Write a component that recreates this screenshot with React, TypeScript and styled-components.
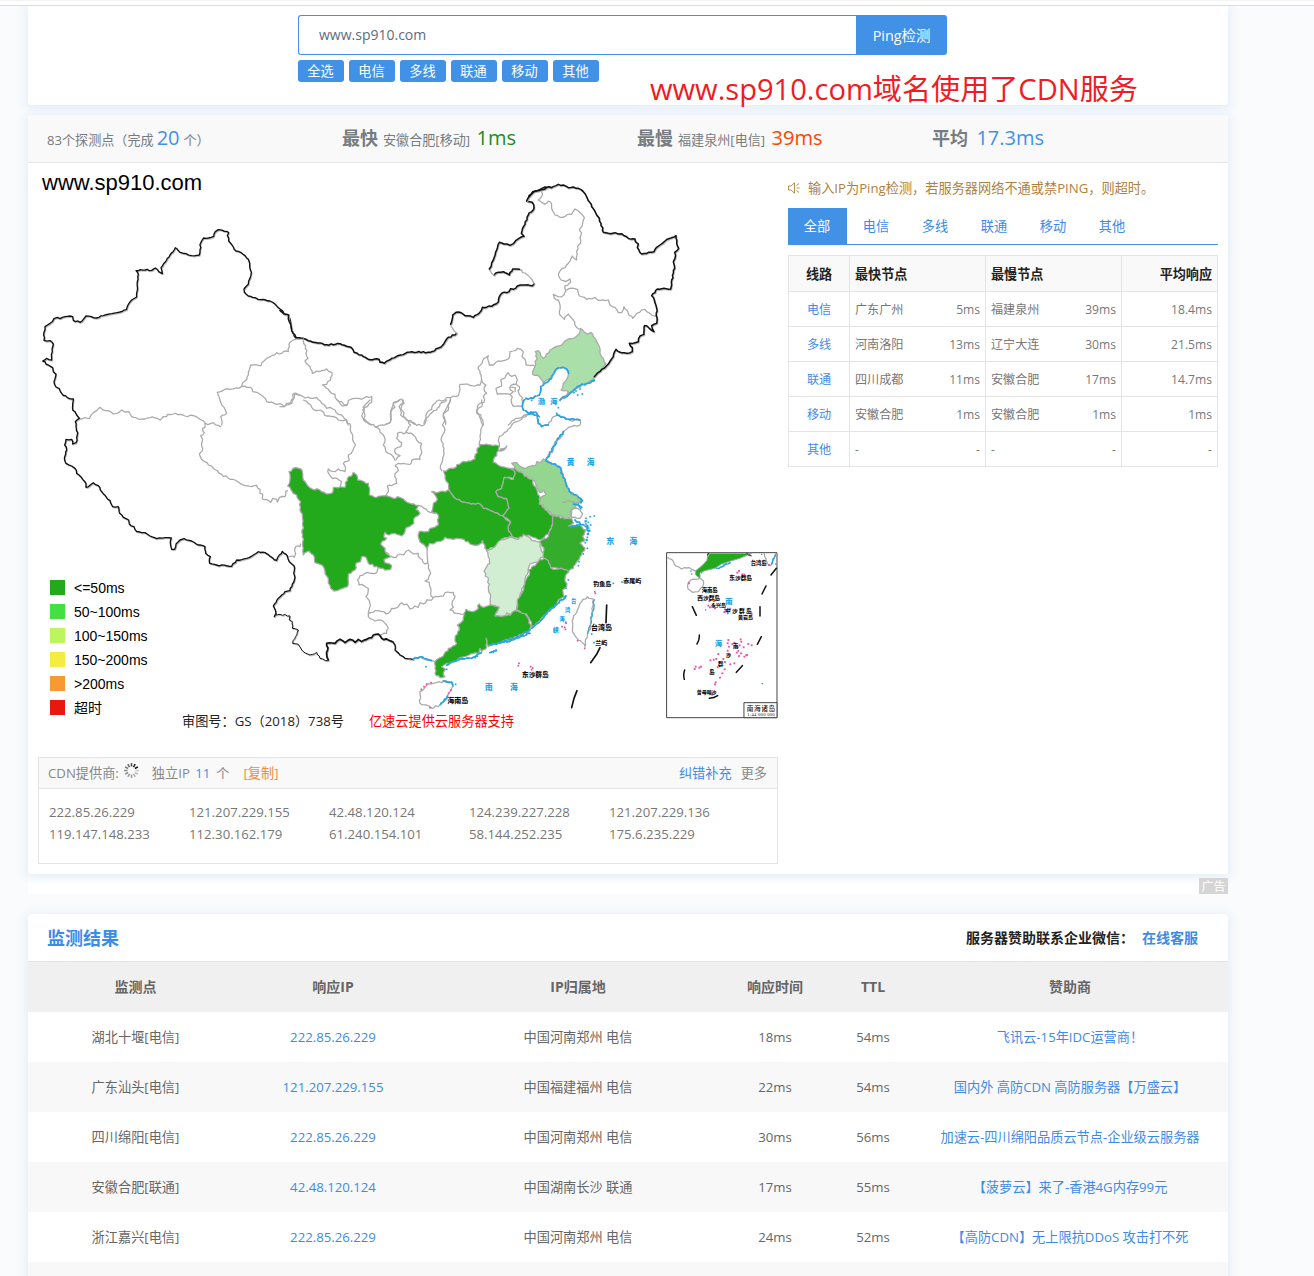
import React from "react";
import styled, { createGlobalStyle } from "styled-components";

const BLUE = "#4191e7";

const Global = createGlobalStyle`
  * { box-sizing: border-box; }
  html, body { margin: 0; padding: 0; }
  body {
    height: 1276px;
    overflow: hidden;
    background: #f9fbfd;
    color: #767c82;
    font: 13.2px/20px "Open Sans", "Noto Sans CJK SC", sans-serif;
  }
`;

const Page = styled.div`
  width: 1314px;
  height: 1276px;
  overflow: hidden;
`;
const TopStrip = styled.div`
  height: 6px;
  background: #fff;
  border-top: 1px solid #f3f3f3;
  border-bottom: 1px solid #dadce0;
`;
const Container = styled.main`
  width: 1200px;
  margin-left: 28px;
`;
const Card = styled.section<{ $h: number; $mt?: number }>`
  height: ${(p) => p.$h}px;
  margin-top: ${(p) => p.$mt ?? 0}px;
  background: #fff;
  border-radius: 3px;
  box-shadow: 0 2px 10px 2px #e3edf7;
  position: relative;
`;

/* search */
const SearchCard = styled(Card)`
  padding: 9px 0 0 270px;
  border-radius: 0 0 3px 3px;
  clip-path: inset(0 -20px -20px -20px);
`;
const SearchRow = styled.div`
  display: flex;
  width: 649px;
  height: 40px;
`;
const Field = styled.div`
  flex: 1;
  border: 1px solid ${BLUE};
  border-right: 0;
  border-radius: 3px 0 0 3px;
  padding: 0 20px;
  font-size: 14px;
  line-height: 38px;
  color: #5d6b80;
`;
const PingButton = styled.button`
  width: 91px;
  border: 0;
  border-radius: 0 3px 3px 0;
  background: ${BLUE};
  color: #fff;
  font: 14.4px/41px "Open Sans", "Noto Sans CJK SC", sans-serif;
  padding: 0;
`;
const Tags = styled.div`
  display: flex;
  gap: 5px;
  margin-top: 5px;
`;
const Tag = styled.span`
  width: 46px;
  height: 22px;
  border-radius: 3px;
  background: ${BLUE};
  color: #fff;
  text-align: center;
  line-height: 22px;
  padding-right: 1px;
`;
const Annotation = styled.div`
  position: absolute;
  left: 622px;
  top: 62px;
  font-size: 29.1px;
  line-height: 42px;
  color: #ee1c24;
  white-space: nowrap;
`;

/* summary */
const Summary = styled.header`
  height: 48px;
  background: #f9f9f9;
  border-bottom: 1px solid #e6e6e6;
  border-radius: 3px 3px 0 0;
  display: grid;
  grid-template-columns: repeat(4, 295px);
  padding-left: 19px;
`;
const Stat = styled.div`
  font-size: 13.1px;
  line-height: 46px;
  white-space: nowrap;
  b { font-size: 18px; margin-right: 5px; }
`;
const Big = styled.span<{ $c: string; $ml?: number }>`
  font-size: 20px;
  color: ${(p) => p.$c};
  margin: 0 4px 0 ${(p) => p.$ml ?? 3}px;
`;
const Body = styled.div`
  display: flex;
  gap: 10px;
  padding: 0 10px;
`;
const Left = styled.div`
  width: 740px;
`;
const MapBox = styled.div`
  height: 594px;
  position: relative;
`;
const MapSvg = styled.svg`
  display: block;
  width: 740px;
  height: 594px;
`;
const MapTitle = styled.div`
  position: absolute;
  left: 4px;
  top: 7px;
  color: #000;
  font: 22px/26px "Liberation Sans", Arial, sans-serif;
`;
const Legend = styled.div`
  position: absolute;
  left: 12px;
  top: 413px;
  display: grid;
  grid-auto-rows: 24px;
  color: #000;
  font: 14px/24px "Liberation Sans", "Noto Sans CJK SC", sans-serif;
`;
const LegendItem = styled.div<{ $c: string }>`
  display: flex;
  align-items: center;
  gap: 9px;
  &::before { content: ""; width: 15px; height: 15px; margin-bottom: 1px; background: ${(p) => p.$c}; }
`;
const Caption = styled.div`
  position: absolute;
  left: 144px;
  top: 548px;
  display: flex;
  gap: 25px;
  color: #222;
  white-space: nowrap;
  em { font-style: normal; color: #f00; }
`;

/* CDN box */
const Cdn = styled.div`
  height: 107px;
  border: 1px solid #e4e4e4;
`;
const CdnHead = styled.div`
  display: flex;
  height: 31px;
  align-items: center;
  background: #f9f9f9;
  border-bottom: 1px solid #e4e4e4;
  padding: 0 10px 0 9px;
  white-space: pre;
  color: #888;
`;
const Link = styled.a<{ $c?: string }>`
  color: ${(p) => p.$c ?? "#3c8ce7"};
`;
const Count = styled.span`
  margin: 0 6px 0 2px;
  color: #3c8ce7;
`;
const Copy = styled.span`
  margin-left: 14px;
  color: #f08b45;
`;
const Spinner = styled.svg`
  margin: -5px 12px 0 4px;
`;
const Push = styled.span`
  margin-left: auto;
  display: flex;
  gap: 9px;
`;
const Ips = styled.div`
  display: grid;
  grid-template-columns: repeat(5, 140px);
  grid-auto-rows: 22px;
  padding: 12px 10px;
  line-height: 22px;
  color: #777;
`;

/* right column */
const Right = styled.div`
  width: 430px;
  padding-top: 14px;
`;
const Notice = styled.div`
  display: flex;
  align-items: center;
  gap: 8px;
  height: 22px;
  color: #b0803c;
  white-space: nowrap;
`;
const Tabs = styled.nav`
  display: flex;
  height: 37px;
  margin-top: 9px;
  border-bottom: 1px solid ${BLUE};
`;
const Tab = styled.span<{ $on?: boolean }>`
  width: 59px;
  padding-right: 1px;
  text-align: center;
  line-height: 36px;
  color: ${(p) => (p.$on ? "#fff" : "#3c8ce7")};
  background: ${(p) => (p.$on ? BLUE : "transparent")};
`;
const Lines = styled.div`
  margin-top: 10px;
  border: 1px solid #e4e4e4;
  border-width: 1px 0 0 1px;
`;
const LineRow = styled.div<{ $head?: boolean }>`
  display: grid;
  grid-template-columns: 61px 136px 136px 96px;
  height: ${(p) => (p.$head ? 36 : 35)}px;
  font-size: ${(p) => (p.$head ? 13.1 : 12.1)}px;
  font-weight: ${(p) => (p.$head ? 700 : 400)};
  color: ${(p) => (p.$head ? "#222" : "#777")};
  background: ${(p) => (p.$head ? "#f9f9f9" : "#fff")};
`;
const LineCell = styled.div<{ $j?: string }>`
  display: flex;
  align-items: center;
  justify-content: ${(p) => p.$j ?? "space-between"};
  padding: 1px 5px 0;
  border: 1px solid #e4e4e4;
  border-width: 0 1px 1px 0;
`;

/* ad strip */
const AdStrip = styled.div`
  height: 20px;
  display: flex;
  justify-content: flex-end;
  align-items: flex-end;
  background: #fff;
`;
const AdTag = styled.span`
  position: relative;
  width: 29px;
  height: 16px;
  background: #d5d5d5;
  color: #fff;
  font-size: 12px;
  line-height: 17px;
  text-align: center;
`;

/* results */
const ResultHead = styled.header`
  height: 48px;
  display: flex;
  align-items: center;
  justify-content: space-between;
  padding: 0 30px 0 19px;
  border-bottom: 1px solid #e4e4e4;
  font-size: 14px;
  font-weight: 700;
  color: #222;
  h2 { margin: 0; font-size: 18px; color: #3c8ce7; }
`;
const Contact = styled.span`
  display: flex;
  gap: 8px;
`;
const Row = styled.div<{ $bg: string; $head?: boolean }>`
  display: grid;
  grid-template-columns: 215px 180px 310px 84px 112px 282px;
  height: 50px;
  align-items: center;
  text-align: center;
  white-space: nowrap;
  background: ${(p) => p.$bg};
  color: #666;
  font-size: ${(p) => (p.$head ? 14 : 13.2)}px;
  font-weight: ${(p) => (p.$head ? 700 : 400)};
`;

const tags = ["全选", "电信", "多线", "联通", "移动", "其他"];
const tabs = ["全部", "电信", "多线", "联通", "移动", "其他"];
const legend: [string, string][] = [
  ["#22aa1c", "<=50ms"],
  ["#43e043", "50~100ms"],
  ["#bdf55f", "100~150ms"],
  ["#f5ec42", "150~200ms"],
  ["#f79a34", ">200ms"],
  ["#e81710", "超时"],
];
const lines = [
  ["电信", "广东广州", "5ms", "福建泉州", "39ms", "18.4ms"],
  ["多线", "河南洛阳", "13ms", "辽宁大连", "30ms", "21.5ms"],
  ["联通", "四川成都", "11ms", "安徽合肥", "17ms", "14.7ms"],
  ["移动", "安徽合肥", "1ms", "安徽合肥", "1ms", "1ms"],
  ["其他", "-", "-", "-", "-", "-"],
];
const ips = [
  "222.85.26.229", "121.207.229.155", "42.48.120.124", "124.239.227.228", "121.207.229.136",
  "119.147.148.233", "112.30.162.179", "61.240.154.101", "58.144.252.235", "175.6.235.229",
];
const results = [
  ["湖北十堰[电信]", "222.85.26.229", "中国河南郑州 电信", "18ms", "54ms", "飞讯云-15年IDC运营商！"],
  ["广东汕头[电信]", "121.207.229.155", "中国福建福州 电信", "22ms", "54ms", "国内外 高防CDN 高防服务器【万盛云】"],
  ["四川绵阳[电信]", "222.85.26.229", "中国河南郑州 电信", "30ms", "56ms", "加速云-四川绵阳品质云节点-企业级云服务器"],
  ["安徽合肥[联通]", "42.48.120.124", "中国湖南长沙 联通", "17ms", "55ms", "【菠萝云】来了-香港4G内存99元"],
  ["浙江嘉兴[电信]", "222.85.26.229", "中国河南郑州 电信", "24ms", "52ms", "【高防CDN】无上限抗DDoS 攻击打不死"],
];

/* Borders are stored as coarse polylines; this adds small fixed wiggles between the
   points. Both directions of an edge give the same wiggle, so neighbours stay joined. */
const hash = (a: number, b: number) => {
  const v = Math.sin(a * 12.9898 + b * 78.233) * 43758.5453;
  return v - Math.floor(v) - 0.5;
};
const rough = (d: string, amp = 6) =>
  d
    .split("M")
    .filter((s) => s.trim())
    .map((sub) => {
      const closed = sub.includes("Z");
      const n = (sub.match(/-?[\d.]+/g) ?? []).map(Number);
      const pts: number[][] = [];
      for (let i = 0; i + 1 < n.length; i += 2) pts.push([n[i], n[i + 1]]);
      if (closed) pts.push(pts[0]);
      const out: number[][] = [pts[0]];
      for (let i = 1; i < pts.length; i++) {
        const [ax, ay] = pts[i - 1];
        const [bx, by] = pts[i];
        const len = Math.hypot(bx - ax, by - ay);
        const k = Math.floor(len / 6.5);
        for (let j = 1; j < k; j++) {
          const t = j / k;
          const x = ax + (bx - ax) * t;
          const y = ay + (by - ay) * t;
          const off = hash(Math.round(x), Math.round(y)) * amp;
          const s = ax < bx || (ax === bx && ay < by) ? 1 : -1;
          out.push([x - ((by - ay) / len) * off * s, y + ((bx - ax) / len) * off * s]);
        }
        out.push([bx, by]);
      }
      return "M" + out.map((p) => p.map((c) => c.toFixed(1)).join(",")).join(" ") + (closed ? "Z" : "");
    })
    .join(" ");

/* Map sheets: each is drawn at three times the map's scale from its own origin. */
const Sheet = ({ x, y, children }: { x: number; y: number; children: React.ReactNode }) => (
  <g transform={`translate(${x} ${y}) scale(0.33333)`}>{children}</g>
);
const K = ({ d, w = 4.5 }: { d: string; w?: number }) => {
  const r = rough(d, 4.5);
  return (
    <>
      <path d={r} stroke="#bbb" strokeWidth={w} transform="translate(2 3)" />
      <path d={r} stroke="#111" strokeWidth={w} />
    </>
  );
};
const G = ({ d, f }: { d: string; f?: string }) => (
  <path d={rough(d)} stroke="#aaa" strokeWidth={3.8} fill={f ?? "none"} />
);
const B = ({ d, w = 5 }: { d: string; w?: number }) => {
  const r = rough(d);
  return (
    <>
      <path d={r} stroke="#9ab" strokeWidth={4} />
      <path d={r} stroke="#20a5ea" strokeWidth={w} strokeDasharray="20 5 9 6" />
    </>
  );
};
const Dots = ({ pts, c = "#20a5ea", s = 5 }: { pts: number[][]; c?: string; s?: number }) => (
  <>{pts.map(([x, y], i) => <rect key={i} x={x - s / 2} y={y - s / 2} width={s} height={s} fill={c} />)}</>
);
const T = ({ x, y, t, c = "#111", s = 20, sp = 0 }: { x: number; y: number; t: string; c?: string; s?: number; sp?: number }) => (
  <text x={x} y={y} fill={c} fontSize={s} letterSpacing={sp} fontWeight={900} fontFamily='"Noto Sans CJK SC", sans-serif'>{t}</text>
);
const GREEN = "#22aa1c";
const SEA = "#20a5ea";
const PINK = "#ea4cab";

const ChinaMap = () => (
  <MapSvg viewBox="38 163 740 594" fill="none" strokeLinejoin="round" strokeLinecap="round">
    <Sheet x={30} y={165}>
      <G d="M575,780 572,755 590,745 583,728 572,712 567,695 562,682 580,676 600,673 618,669 635,665 650,667 662,667 668,680 680,682 690,688 700,695 710,710 725,711 740,718 750,716 762,726 775,719 785,715 790,700 788,688 797,684 810,692" />
      <G d="M635,663 645,648 655,630 658,614 662,600 693,602 702,588 710,580 725,572 740,563 748,567 762,559 775,560 778,545 780,532 790,525 800,522" />
      <K w={4} d="M810,520 798,519 790,507 784,490 783,478 781,468 775,451 762,446 750,432 742,425 735,417 720,408 700,403 684,403 668,397 655,393 643,382 642,372 655,358 656,348 660,340 664,322 659,305 659,295 655,283 645,272 632,262 618,258 606,240 596,228 592,212 596,203 583,199 578,196 565,194 556,200 551,214 535,219 521,219 513,232 510,255 508,270 485,272 468,266 450,262 436,248 420,270 405,292 393,308 397,326 386,320 376,309 365,316 345,315 318,317 325,328 322,350 321,380 320,396 305,405 294,420 289,434 270,441 245,446 220,452 200,459 184,455 168,453 160,463 150,472 130,466 128,455 120,453 105,455 90,461 82,457 72,461 60,475 45,485 41,510 42,526 60,527 70,537 67,560 65,585 50,580 38,588 55,600 68,608 70,620 78,628 72,650 78,666 88,671 95,685 112,698 130,702 128,735 140,750 148,760" />
    </Sheet>
    <Sheet x={280} y={165}>
      <K d="M0,437 12,447 26,450 25,462 32,478 35,497 48,518 70,520 100,532 140,539 180,536 213,547 222,562 245,570 270,584 297,583 300,592 313,595 335,580 362,570 390,561 450,562 482,547 500,522 530,505" />
      <G d="M530,505 518,490 512,478" />
      <K d="M512,478 518,450 528,442 545,444 555,452 580,457 597,445 607,427 635,424 655,411 657,397 667,383 687,380 692,371 700,373 712,363 730,360 758,362 762,356" />
      <G d="M762,356 757,345 740,328 718,313" />
      <K d="M718,313 698,312 688,330 670,320 655,322 642,330" />
      <G d="M642,330 628,315" />
      <K d="M628,312 634,303 640,285 650,255 658,232 672,237 690,241 700,236 708,226 732,214 724,205 735,178 745,150 762,130 757,112 740,109 747,92 758,80 780,73 795,66 810,66" />
      <G d="M70,522 76,550 84,580 75,588 90,605 97,625 110,618 125,617 140,612 155,622 152,645 140,658 128,660 145,673 155,685 165,688 170,704 185,710 200,722 205,706 225,700 245,703 260,695 275,695 275,712 262,725 248,735 255,752 250,765 265,773 275,780" />
      <G d="M0,725 15,723 20,715 32,714 35,703 42,700 42,685 60,690 75,699 85,696 100,700 110,697 125,715 140,730 150,727 165,735 175,748 190,756 200,765 205,780" />
      <G d="M320,778 330,772 333,748 335,730 345,710 365,702 372,715 362,735 362,750 375,757 385,768 392,766 405,778" />
      <G d="M432,775 438,760 440,745 455,733 465,715 478,705 492,706 500,698 512,698 520,693 535,692 540,658 570,661 600,660 605,645 600,625 595,605 606,595 612,580 625,572 628,600 640,600 655,588 670,587 688,578 690,560 700,558 712,550 722,553 730,560 726,575 735,583 738,600 765,603" />
      <G d="M512,700 508,715 505,735 490,750 497,778" />
      <G d="M605,645 618,660 612,672 620,685 610,695 612,712 596,718 590,740 603,750 610,780" />
      <G d="M685,623 695,634 705,630 712,645 708,658 692,662 692,675 700,680 690,688 675,686 652,688 648,670 665,663 662,645 675,639Z M708,658 718,665 714,678 728,698 724,725 700,724 695,715 697,696 690,688 M692,666 706,668 705,680" />
      <G d="M685,780 695,768 715,760 740,750" />
    </Sheet>
    <Sheet x={500} y={165}>
      <G d="M125,80 125,95 115,105 125,112 135,118 145,108 155,117 155,130 165,150 180,157 200,150 215,148 225,132 240,143 253,158 248,175 240,190 243,210 242,235 233,245 230,285 217,273 210,288 195,308 180,318 175,328 183,345 197,350 210,342 212,352 195,362 198,378 192,390 175,395 160,388 163,400 175,405 180,420 178,440 185,455 193,463 205,447 220,465 228,485 236,492" />
      <G d="M200,375 222,370 232,373 238,393 260,403 275,402 285,397 295,406 315,407 325,405 330,420 345,427 355,443 365,443 372,425 385,445 398,460 410,445 425,435 435,433 440,440 455,450 470,454" />
      <G f="#abdfaa" d="M240,490 252,500 262,508 273,502 280,515 290,530 298,545 300,565 310,580 318,597 305,613 290,628 280,645 260,655 235,668 220,680 205,690 180,708 184,698 200,690 205,680 183,675 190,655 205,630 204,618 190,607 168,613 160,628 150,640 140,645 130,657 118,635 98,628 105,605 105,590 112,580 106,560 115,557 122,572 130,580 150,555 168,545 185,540 200,525 228,515 237,507Z" />
      <K d="M80,108 90,92 102,80 125,74 140,68 160,65 175,58 190,60 205,68 220,66 235,70 250,80 262,100 275,125 290,150 298,160 303,175 310,202 325,205 345,203 355,207 365,206 385,220 405,222 406,230 415,237 412,248 425,267 445,262 462,260 470,247 480,240 495,228 510,220 528,212 530,235 536,250 524,262 525,280 520,290 524,310 515,345 515,360 512,372 472,372 465,383 455,392 463,405 470,430 470,475 455,482 462,500 448,490 440,482 433,482 432,508 420,513 415,530 405,533 388,535 397,548 397,560 380,565 365,563 348,553 340,575 325,597 305,613 283,635" />
      <B d="M283,645 262,655 240,662 205,690 180,705 M206,625 200,612 190,607 168,613 155,640 122,665 118,690 100,700 78,700 68,715 70,735 85,745 110,742 118,755" />
      <Dots pts={[[240, 672], [247, 687], [233, 690], [222, 683], [228, 678], [95, 706], [175, 728], [170, 745], [281, 648]]} />
      <T x={113} y={717} t="渤" c={SEA} s={22} /><T x={150} y={717} t="海" c={SEA} s={22} />
    </Sheet>
    <Sheet x={30} y={400}>
      <G d="M148,55 178,55 190,38 200,32 210,22 225,32 235,32 250,42 262,40 275,30 284,36 297,35 305,50 318,53 330,58 345,57 360,53 375,54 390,60 400,50 410,50 412,43 430,42 450,43 465,48 490,47 510,58 525,68 533,74 550,68 572,80" />
      <G d="M525,70 525,82 518,85 523,98 512,107 518,118 515,130 518,145 508,162 520,182 535,195 550,205 562,212 575,223 600,238 615,240 630,250 645,257 655,258 665,260 680,256 690,268 690,280 698,282 697,297 710,299 722,307 728,295 740,298 742,306 748,293 765,290 767,275 772,272" />
      <K w={4} d="M148,55 136,65 139,85 142,105 138,128 128,132 125,118 108,118 104,135 110,150 104,170 108,190 125,198 135,205 140,220 158,238 168,250 168,262 180,256 190,248 205,257 215,275 228,290 240,302 248,320 265,320 269,340 280,352 296,360 298,372 312,380 320,395 335,398 345,398 360,408 380,416 405,413 424,414 421,430 425,448 434,448 438,432 450,420 462,416 485,423 505,435 525,440 527,460 541,470 539,490 560,495 605,499 620,480 650,475 670,465 685,455 705,458 722,470 740,481 748,465 757,454 772,468 778,485 792,497 793,540 780,572 765,575 745,595 730,618 738,640 733,650" />
    </Sheet>
    <Sheet x={260} y={400}>
      <G d="M130,0 140,4 160,28 180,30 200,48 220,50 235,60 260,60 272,80 272,95 278,105 278,120 287,135 278,152 265,165 268,180 250,190 257,203 255,215 235,207 225,215 205,207 207,222 218,236 232,236 245,245 240,262" />
      <G d="M310,20 312,35 305,48 320,65 345,80 355,85 360,97 370,105 375,125 370,135 378,155 395,165 405,180" />
      <G d="M420,0 400,8 405,22 393,35 392,55 388,70 365,75 345,80 M310,22 330,0 M232,0 248,18 262,14" />
      <G d="M430,0 428,10 417,20 432,38 430,50 445,63 462,68 470,76 492,75 498,55 515,38 530,30 540,12 560,0" />
      <G d="M445,63 452,75 438,95 460,105 470,120 485,130 485,155 480,178 455,181 450,193 430,190 415,190 405,197 415,212 405,222 410,250 395,257 382,258 385,275 378,285 M438,98 412,100 410,115 425,128 423,140 405,147 408,162 420,167 408,180" />
      <G d="M570,0 562,20 550,40 555,60 547,75 555,90 548,105 545,125 552,145 548,180 542,195 545,212" />
      <G d="M665,0 665,20 652,25 650,40 662,58 668,75 662,90 660,110 658,133 M810,40 798,50 770,65 755,75 740,95 718,110 715,122 718,138" />
      <G d="M475,316 492,325 510,337 525,340 M372,455 395,470 408,472 420,462 430,465 445,450 460,462 475,460 480,475 495,492 503,488 502,450" />
      <G d="M503,488 505,505 512,520 505,538 495,543 508,547 512,565 512,580 518,592" />
      <G d="M355,503 350,518 335,520 315,520 300,527 292,540 297,555 312,557 325,565 318,590 330,610 325,640 345,632 385,640 395,625 415,620 425,608 432,615 440,612 450,627 465,618 475,622 480,608 490,612 500,600 515,600 520,592 550,588 555,578 580,577 585,590 577,605 580,622 570,630 590,640 610,643" />
      <G d="M325,640 325,650 345,663 362,660 380,675 385,685 380,700 355,705" />
      <G d="M88,470 98,468 103,472 107,460 107,440 120,440 122,432" />
      <G f={GREEN} d="M105,203 125,208 128,220 130,240 150,263 165,270 170,266 185,275 200,282 218,278 220,262 255,262 262,235 275,228 280,217 290,225 293,240 325,250 328,285 350,292 380,287 400,295 412,290 430,297 455,312 475,316 468,328 480,340 462,355 462,370 455,375 440,382 435,395 425,408 405,400 388,405 375,397 372,412 380,415 362,432 375,445 378,460 392,470 372,480 375,488 395,497 392,508 375,510 355,503 325,490 318,472 305,470 302,485 288,490 285,510 265,522 263,560 240,568 222,573 212,565 205,540 185,495 165,488 160,465 147,453 130,465 127,350 120,330 122,305 110,285 100,280 83,258 90,240 87,215Z" />
      <G f={GREEN} d="M515,275 535,277 570,272 580,290 590,298 620,308 660,312 670,325 705,338 728,347 750,365 745,385 757,410 730,415 712,435 680,450 668,422 655,435 630,432 625,425 590,415 580,418 555,412 550,420 530,425 520,432 508,430 502,450 485,430 475,412 478,395 505,395 510,385 535,375 535,345 515,335 520,310 532,298Z" />
      <G f={GREEN} d="M658,133 718,138 715,152 700,187 725,200 750,205 765,215 760,235 733,232 725,265 708,275 715,290 740,295 747,325 728,347 705,338 670,325 660,312 620,308 590,298 570,275 565,250 555,235 550,213 580,205 605,187 625,183 645,177Z" />
      <G f={GREEN} d="M755,205 780,215 815,235 820,255 832,275 840,290 838,312 853,325 870,343 882,348 875,385 850,415 840,420 805,405 785,415 757,410 745,385 752,365 728,347 747,325 740,295 715,290 708,275 725,265 733,232 760,238 765,215Z" />
      <G f="#75a971" d="M718,153 740,138 732,150Z" />
      <G f="#d2eed2" d="M757,412 775,418 790,403 805,410 815,422 840,425 843,445 852,465 835,485 810,492 805,515 797,530 795,545 785,575 775,600 765,635 752,643 740,638 730,650 705,645 718,622 690,612 692,590 685,560 685,540 672,515 680,500 690,490 680,452 705,440 715,425Z" />
      <G f={GREEN} d="M658,612 670,622 690,615 715,620 705,648 730,648 752,645 765,632 795,640 805,655 812,683 805,700 785,703 760,715 740,718 720,730 698,732 685,740 678,715 680,742 665,755 660,745 655,762 640,760 620,768 600,773 585,785 560,790 545,800 556,808 550,818 555,830 540,833 525,820 525,785 550,768 565,745 590,730 585,715 598,690 592,675 610,660 612,640 618,628 640,635 650,630Z" />
      <K w={3} d="M45,645 60,643 90,648 88,660 97,665 97,685 115,690 107,710 98,730 115,733 130,755 150,765 170,757 180,775 205,782" />
      <K w={5} d="M205,780 200,765 203,750 200,730 225,730 240,718 255,728 270,718 285,727 295,718 305,725 320,718 335,713 340,705 355,702 365,715 385,720 398,725" />
      <K w={4} d="M398,725 405,735 405,750 420,765 435,775 460,779" />
      <G d="M460,779 480,770 495,778 512,780 525,785" />
      <B d="M460,777 480,770 500,777 515,782 M560,796 600,777 640,772 665,758 M690,758 710,752 M690,735 760,720 810,700" />
      <G f="#fff" d="M480,875 495,862 505,852 530,848 560,843 575,845 580,858 565,880 560,895 540,915 515,925 500,915 480,910Z" />
      <B d="M550,843 575,847 578,860 M562,888 540,915" />
      <Dots c={PINK} pts={[[484, 868], [492, 860], [500, 852], [513, 848], [572, 870], [566, 880], [510, 923]]} />
      <Dots pts={[[498, 800], [645, 773], [652, 769], [700, 757], [708, 750], [560, 808], [587, 853]]} />
      <T x={562} y={908} t="海南岛" s={21} />
      <T x={675} y={869} t="南" c={SEA} s={23} />
    </Sheet>
    <Sheet x={500} y={400}>
      <G d="M75,45 85,43 112,45 115,70 125,80 145,75 160,50 172,43 185,52 210,62 240,60 240,75 215,80 190,95 185,110 165,125 160,150 145,165 138,180" />
      <B d="M85,43 112,45 115,70 125,80 145,75 M170,45 210,58 240,60 M190,95 160,140 138,180" />
      <G f="#94d690" d="M35,190 50,187 62,200 78,205 92,198 105,198 110,185 120,188 130,177 150,190 180,203 188,225 195,245 208,275 225,285 245,300 243,310 220,305 228,322 213,330 212,350 195,357 180,347 155,343 133,325 130,315 118,312 120,295 138,285 132,270 120,278 105,245 98,238 85,235 70,222 45,205Z" />
      <G f="#33ad2b" d="M162,345 195,357 215,355 220,370 205,378 235,375 258,390 248,410 252,425 240,430 255,445 240,470 220,505 205,515 185,505 150,503 145,485 130,475 132,450 120,425 145,410 155,380Z" />
      <G f={GREEN} d="M135,475 145,482 152,503 165,508 185,505 207,515 195,535 200,560 188,570 192,590 175,600 165,620 130,650 95,683 90,660 80,642 50,630 52,600 65,580 75,545 88,525 85,510 110,490 118,478Z" />
      <G f="#fff" d="M215,330 232,325 248,342 240,355 215,352Z" />
      <G d="M187,308 210,303 225,312 235,308" />
      <B d="M138,182 178,200 198,250 208,275 230,285 248,303 M220,312 245,322 M225,360 262,382 266,395 M213,380 240,375 M198,588 165,615 130,655 95,685 M90,690 50,712 0,728" />
      <Dots pts={[[270, 350], [283, 348], [258, 355], [265, 367], [272, 375], [266, 384], [258, 372], [262, 412], [256, 428], [262, 445], [250, 462], [237, 485], [235, 497], [198, 565], [205, 540], [195, 590], [340, 550], [366, 546], [275, 702], [282, 728], [188, 653], [198, 670], [235, 312], [242, 326]]} />
      <Dots s={7} pts={[[262, 378], [268, 392], [257, 364], [240, 320], [243, 305], [264, 402], [260, 420]]} />
      <G f="#fff" d="M262,590 282,598 278,620 275,640 272,680 262,705 255,740 247,728 235,720 217,690 220,655 232,630 245,605Z" />
      <B w={3} d="M283,600 276,640 273,670 264,700" />
      <Dots c={PINK} pts={[[284, 575], [286, 580], [197, 667], [186, 680], [194, 682], [196, 688], [233, 722], [254, 745], [57, 790], [55, 797], [92, 800], [98, 804], [95, 809]]} />
      <path d="M320,615 318,668 M300,743 290,763 272,788 M231,872 222,895 215,923" stroke="#111" strokeWidth={5} />
      <T x={200} y={195} t="黄" c={SEA} s={23} /><T x={260} y={195} t="海" c={SEA} s={23} />
      <T x={319} y={432} t="东" c={SEA} s={24} /><T x={388} y={432} t="海" c={SEA} s={24} />
      <T x={30} y={869} t="海" c={SEA} s={23} />
      <T x={213} y={608} t="台" c={SEA} s={16} /><T x={195} y={635} t="湾" c={SEA} s={16} />
      <T x={178} y={663} t="海" c={SEA} s={16} /><T x={158} y={697} t="峡" c={SEA} s={18} />
      <T x={280} y={557} t="钓鱼岛" s={18} /><T x={370} y={550} t="赤尾屿" s={18} />
      <T x={273} y={691} t="台湾岛" s={21} /><T x={286} y={736} t="兰屿" s={18} />
      <T x={66} y={832} t="东沙群岛" s={20} />
    </Sheet>
    <Sheet x={655} y={540}>
      <rect x={36} y={38} width={330} height={495} fill="#fff" stroke="#444" strokeWidth={3} />
      <G d="M38,52 50,58 58,72 70,80 80,87 95,84 110,88 120,92" />
      <path d="M160,40 290,40 255,55 230,62 200,72 180,85 150,92 135,98 135,115 122,105 122,92 140,78 155,62Z" fill={GREEN} stroke="#9aa" strokeWidth={3} />
      <K w={3} d="M160,40 158,45 M275,40 288,46" />
      <G d="M99,130 108,120 135,115 145,122 143,140 130,155 112,157 99,147Z M328,40 335,65 347,77 352,62 362,40" />
      <B w={4} d="M185,85 225,68 M350,72 362,45" />
      <Dots pts={[[108, 93], [110, 102], [320, 43], [140, 98], [205, 75], [152, 210], [322, 431], [362, 72]]} s={4} />
      <path d="M364,85 348,105 M333,138 321,162 M315,200V228 M112,200 124,226 M133,285 Q134,300 126,312 M319,290 307,313 M262,377 244,397 M89,390 Q84,405 88,418 M163,475 Q178,474 188,467" stroke="#111" strokeWidth={4.5} />
      <Dots c={PINK} s={5.5} pts={[[252, 93], [247, 98], [262, 103], [268, 104], [342, 75], [102, 130], [163, 183], [178, 183], [160, 197], [165, 202], [180, 205], [210, 208], [225, 206], [208, 216], [216, 213], [290, 222], [220, 300], [218, 310], [222, 320], [232, 312], [238, 308], [257, 298], [259, 305], [254, 316], [248, 322], [266, 322], [280, 312], [290, 316], [274, 346], [268, 350], [252, 348], [245, 338], [250, 333], [258, 340], [276, 345], [190, 342], [184, 357], [176, 359], [166, 361], [205, 357], [210, 366], [226, 373], [238, 370], [218, 332], [220, 341], [138, 380], [133, 383], [122, 380], [119, 387], [209, 388], [202, 400], [195, 413], [182, 427], [180, 433], [188, 382], [172, 464]]} />
      <T x={287} y={76} t="台湾岛" s={16} /><T x={223} y={121} t="东沙群岛" s={17} />
      <T x={140} y={157} t="海南岛" s={16} /><T x={127} y={180} t="西沙群岛" s={17} />
      <T x={168} y={200} t="永兴岛" s={15} /><T x={210} y={219} t="中沙群岛" s={17} sp={4} />
      <T x={249} y={238} t="黄岩岛" s={15} />
      <T x={211} y={193} t="南" c={SEA} s={22} /><T x={179} y={317} t="海" c={SEA} s={22} />
      <T x={234} y={323} t="南" s={16} /><T x={212} y={351} t="沙" s={16} /><T x={189} y={377} t="群" s={16} /><T x={163} y={402} t="岛" s={16} />
      <T x={125} y={461} t="曾母暗沙" s={15} />
      <rect x={268} y={488} width={98} height={45} fill="#fff" stroke="#444" strokeWidth={3} />
      <text x={275} y={512} fontSize={20} letterSpacing={2} fontWeight={500} fill="#111" fontFamily='"Noto Sans CJK SC", sans-serif'>南海诸岛</text>
      <text x={277} y={528} fontSize={14} fill="#111" textLength={82} fontFamily='"Liberation Serif", serif'>1:44 000 000</text>
    </Sheet>
  </MapSvg>
);

export default function App() {
  return (
    <Page>
      <Global />
      <TopStrip />
      <Container>
        <SearchCard $h={99}>
          <SearchRow>
            <Field>www.sp910.com</Field>
            <PingButton>Ping检测</PingButton>
          </SearchRow>
          <Tags>{tags.map((t) => <Tag key={t}>{t}</Tag>)}</Tags>
          <Annotation>www.sp910.com域名使用了CDN服务</Annotation>
        </SearchCard>

        <Card $h={759} $mt={10}>
          <Summary>
            <Stat>83个探测点（完成<Big $c="#4191e7">20</Big>个）</Stat>
            <Stat><b>最快</b>安徽合肥[移动] <Big $c="#228b22">1ms</Big></Stat>
            <Stat><b>最慢</b>福建泉州[电信] <Big $c="#ff4500">39ms</Big></Stat>
            <Stat><b>平均</b> <Big $c="#4191e7" $ml={0}>17.3ms</Big></Stat>
          </Summary>
          <Body>
            <Left>
              <MapBox>
                <ChinaMap />
                <MapTitle>www.sp910.com</MapTitle>
                <Legend>
                  {legend.map(([c, t]) => <LegendItem key={t} $c={c}>{t}</LegendItem>)}
                </Legend>
                <Caption><span>审图号：GS（2018）738号</span><em>亿速云提供云服务器支持</em></Caption>
              </MapBox>
              <Cdn>
                <CdnHead>
                  CDN提供商:
                  <Spinner width="17" height="17" viewBox="-8.5 -8.5 17 17">
                    {Array.from({ length: 12 }, (_, i) => (
                      <path key={i} d="M0-4V-7.4" stroke={["#444", "#222", "#111", "#ccc", "#bbb", "#aaa", "#999", "#999", "#888", "#888", "#777", "#666"][i]} strokeWidth="1.5" transform={`rotate(${i * 30})`} />
                    ))}
                  </Spinner>
                  独立IP <Count>11</Count>个<Copy>[复制]</Copy>
                  <Push><Link>纠错补充</Link><span>更多</span></Push>
                </CdnHead>
                <Ips>{ips.map((ip) => <span key={ip}>{ip}</span>)}</Ips>
              </Cdn>
            </Left>
            <Right>
              <Notice>
                <svg width="12" height="12" viewBox="0 0 12 12" fill="none" stroke="#b0803c">
                  <path d="M.5 4H3L6.500.8V11.200L3 8H.5Z M8.500 3.500L11 1.500 M8.500 6H11.500 M8.500 8.500L11 10.500" strokeWidth=".9" />
                </svg>
                输入IP为Ping检测，若服务器网络不通或禁PING，则超时。
              </Notice>
              <Tabs>{tabs.map((t, i) => <Tab key={t} $on={i === 0}>{t}</Tab>)}</Tabs>
              <Lines>
                <LineRow $head>
                  <LineCell $j="center">线路</LineCell>
                  <LineCell>最快节点</LineCell>
                  <LineCell>最慢节点</LineCell>
                  <LineCell $j="flex-end">平均响应</LineCell>
                </LineRow>
                {lines.map((r) => (
                  <LineRow key={r[0]}>
                    <LineCell $j="center"><Link>{r[0]}</Link></LineCell>
                    <LineCell><span>{r[1]}</span><span>{r[2]}</span></LineCell>
                    <LineCell><span>{r[3]}</span><span>{r[4]}</span></LineCell>
                    <LineCell $j="flex-end">{r[5]}</LineCell>
                  </LineRow>
                ))}
              </Lines>
            </Right>
          </Body>
        </Card>

        <AdStrip><AdTag>广告</AdTag></AdStrip>

        <Card $h={420} $mt={20}>
          <ResultHead>
            <h2>监测结果</h2>
            <Contact><span>服务器赞助联系企业微信：</span><Link>在线客服</Link></Contact>
          </ResultHead>
          <Row $head $bg="#f0f0f0">
            <span>监测点</span><span>响应IP</span><span>IP归属地</span><span>响应时间</span><span>TTL</span><span>赞助商</span>
          </Row>
          {results.map((r, i) => (
            <Row key={i} $bg={i % 2 ? "#f8f8f8" : "#fff"}>
              <span>{r[0]}</span><Link>{r[1]}</Link><span>{r[2]}</span><span>{r[3]}</span><span>{r[4]}</span><Link>{r[5]}</Link>
            </Row>
          ))}
          <Row $bg="#f8f8f8" />
        </Card>
      </Container>
    </Page>
  );
}
